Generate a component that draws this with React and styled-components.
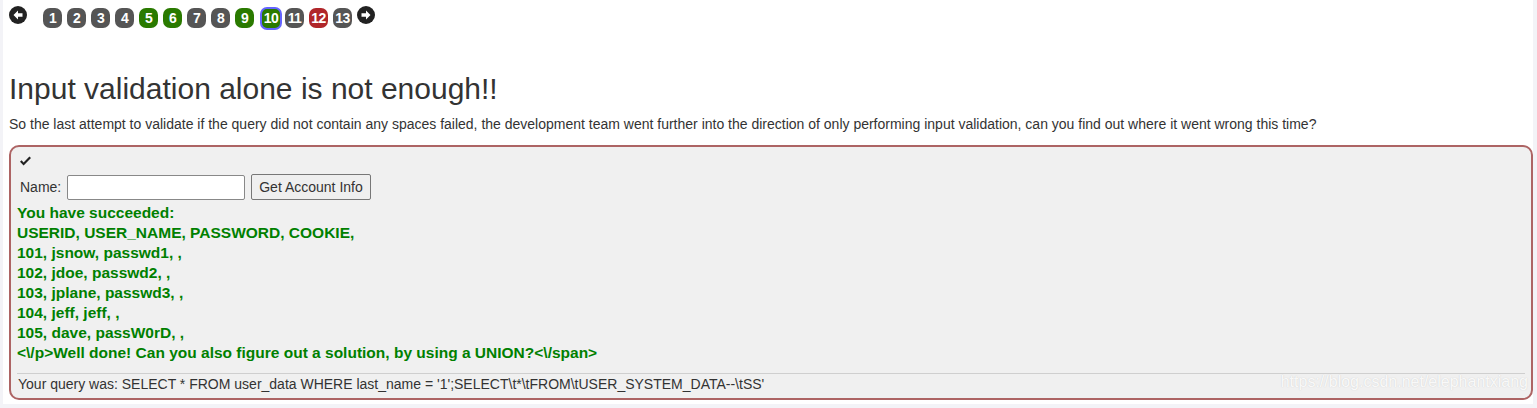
import React from 'react';
import styled, { createGlobalStyle } from 'styled-components';

const GlobalStyle = createGlobalStyle`
  html, body {
    margin: 0;
    padding: 0;
    background: #f3f3f7;
  }
  body {
    font-family: 'Liberation Sans', Arial, sans-serif;
    color: #333;
  }
`;

const pages = [
  { n: 1, kind: 'gray' },
  { n: 2, kind: 'gray' },
  { n: 3, kind: 'gray' },
  { n: 4, kind: 'gray' },
  { n: 5, kind: 'green' },
  { n: 6, kind: 'green' },
  { n: 7, kind: 'gray' },
  { n: 8, kind: 'gray' },
  { n: 9, kind: 'green' },
  { n: 10, kind: 'green', current: true },
  { n: 11, kind: 'gray' },
  { n: 12, kind: 'red' },
  { n: 13, kind: 'gray' },
];

const colors = { gray: '#555555', green: '#2a7a00', red: '#b0262a' };

const rows = [
  'You have succeeded:',
  'USERID, USER_NAME, PASSWORD, COOKIE,',
  '101, jsnow, passwd1, ,',
  '102, jdoe, passwd2, ,',
  '103, jplane, passwd3, ,',
  '104, jeff, jeff, ,',
  '105, dave, passW0rD, ,',
  '<\\/p>Well done! Can you also figure out a solution, by using a UNION?<\\/span>',
];

const Page = styled.div`
  margin-left: 3px;
  width: 1530px;
  height: 404px;
  background: #fff;
  padding: 5px 0 0 6px;
  box-sizing: border-box;
`;

const Nav = styled.div`
  display: flex;
  align-items: center;
  height: 26px;
`;

const Arrow = styled.span`
  width: 18px;
  height: 18px;
  border-radius: 50%;
  background: #222;
  display: inline-flex;
  align-items: center;
  justify-content: center;
  margin-right: ${(p) => p.$gap || 0}px;
  margin-top: -7px;
`;

const PageBtn = styled.span`
  box-sizing: border-box;
  width: ${(p) => (p.$current ? 22 : 19)}px;
  height: ${(p) => (p.$current ? 23 : 20)}px;
  margin: ${(p) => (p.$current ? '0 3px 0 1px' : '0 5px 0 0')};
  border-radius: 7px;
  background: ${(p) => colors[p.$kind]};
  border: ${(p) => (p.$current ? '2px solid #6464ff' : 'none')};
  color: #fff;
  font-weight: bold;
  font-size: 14px;
  display: inline-flex;
  align-items: center;
  justify-content: center;
  letter-spacing: -0.6px;
`;

const Title = styled.h1`
  font-weight: normal;
  font-size: 30px;
  margin: 41px 0 0 0;
  line-height: 34px;
  color: #333;
`;

const Lead = styled.p`
  font-size: 14px;
  margin: 8px 0 0 0;
  line-height: 20px;
`;

const Box = styled.div`
  margin-top: 11px;
  width: 1524px;
  height: 255px;
  box-sizing: border-box;
  border: 2px solid #ad6464;
  border-radius: 10px;
  background: #f0f0f0;
  padding: 4px 6px 0 6px;
  position: relative;
`;

const Check = styled.div`
  height: 20px;
  display: flex;
  align-items: center;
  padding-left: 2px;
`;

const Form = styled.div`
  display: flex;
  align-items: center;
  gap: 6px;
  margin-top: 3px;
  padding-left: 3px;
  font-size: 14px;
`;

const Input = styled.input`
  width: 178px;
  height: 25px;
  box-sizing: border-box;
  border: 1px solid #888;
  border-radius: 2px;
  background: #fff;
`;

const Button = styled.button`
  height: 26px;
  padding: 0 7px;
  font-family: 'Liberation Sans', Arial, sans-serif;
  font-size: 14px;
  color: #333;
  background: #efefef;
  border: 1px solid #777;
  border-radius: 2px;
`;

const Output = styled.div`
  margin-top: 3px;
  color: #008000;
  font-weight: bold;
  font-size: 15.5px;
  line-height: 20px;
`;

const Rule = styled.hr`
  margin: 10px 0 0 0;
  border: none;
  border-top: 1px solid #cfcfcf;
`;

const Query = styled.div`
  font-size: 14px;
  line-height: 20px;
  padding-left: 1px;
`;

const Watermark = styled.span`
  position: absolute;
  right: 3px;
  bottom: 7px;
  font-size: 16px;
  color: rgba(255, 255, 255, 0.9);
  text-shadow: 0 0 1px rgba(190, 190, 190, 0.8);
`;

const ArrowIcon = ({ dir }) => (
  <svg width="12" height="12" viewBox="0 0 12 12">
    <g transform={dir === 'right' ? 'rotate(180 6 6)' : undefined}>
      <path d="M1.5 6 L6 1.6 L6 4.2 L10.5 4.2 L10.5 7.8 L6 7.8 L6 10.4 Z" fill="#fff" />
    </g>
  </svg>
);

const CheckIcon = () => (
  <svg width="13" height="11" viewBox="0 0 13 11">
    <path d="M1 5.8 L4.6 9.4 L12 2 L10.4 0.6 L4.6 6.4 L2.6 4.3 Z" fill="#222" />
  </svg>
);

export default function App() {
  return (
    <>
      <GlobalStyle />
      <Page>
        <Nav>
          <Arrow $gap={16}>
            <ArrowIcon dir="left" />
          </Arrow>
          {pages.map((p) => (
            <PageBtn key={p.n} $kind={p.kind} $current={p.current}>
              {p.n}
            </PageBtn>
          ))}
          <Arrow>
            <ArrowIcon dir="right" />
          </Arrow>
        </Nav>
        <Title>Input validation alone is not enough!!</Title>
        <Lead>
          So the last attempt to validate if the query did not contain any spaces failed, the development team went further into the direction of only performing input validation, can you find out where it went wrong this time?
        </Lead>
        <Box>
          <Check>
            <CheckIcon />
          </Check>
          <Form>
            <span>Name:</span>
            <Input type="text" />
            <Button>Get Account Info</Button>
          </Form>
          <Output>
            {rows.map((r, i) => (
              <div key={i}>{r}</div>
            ))}
          </Output>
          <Rule />
          <Query>
            Your query was: SELECT * FROM user_data WHERE last_name = '1';SELECT\t*\tFROM\tUSER_SYSTEM_DATA--\tSS'
          </Query>
          <Watermark>https://blog.csdn.net/elephantxiang</Watermark>
        </Box>
      </Page>
    </>
  );
}
